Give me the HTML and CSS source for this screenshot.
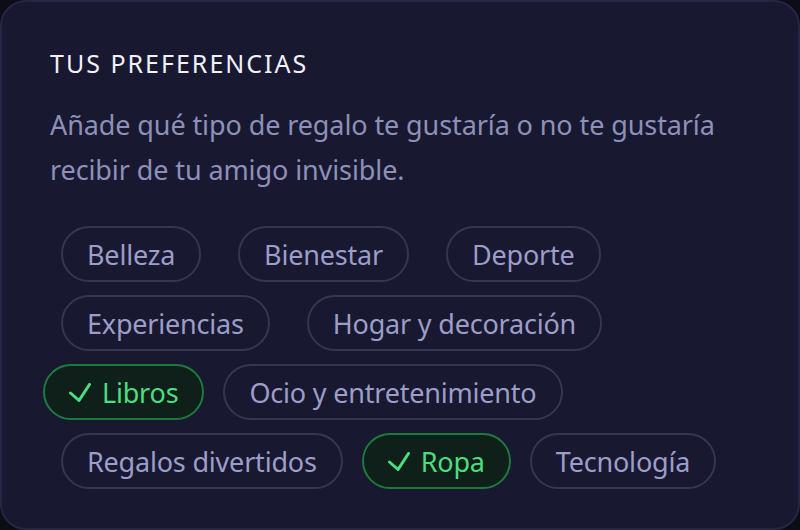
FILE: index.html
```html
<!DOCTYPE html>
<html lang="es">
<head>
  <meta charset="UTF-8">
  <meta name="viewport" content="width=device-width, initial-scale=1.0">
  <title>Tus preferencias</title>
  <link rel="stylesheet" href="styles.css">
</head>
<body>
  <div class="card">
    <h2 class="card-title">TUS PREFERENCIAS</h2>
    <p class="card-text">Añade qué tipo de regalo te gustaría o no te gustaría recibir de tu amigo invisible.</p>
    <div class="chips">
      <button class="chip">Belleza</button>
      <button class="chip">Bienestar</button>
      <button class="chip">Deporte</button>
      <button class="chip">Experiencias</button>
      <button class="chip">Hogar y decoración</button>
      <button class="chip selected">
        <svg class="check" viewBox="0 0 22 19"><polyline points="1.5,10 10,17.5 20.5,1.5"/></svg>Libros
      </button>
      <button class="chip">Ocio y entretenimiento</button>
      <button class="chip">Regalos divertidos</button>
      <button class="chip selected">
        <svg class="check" viewBox="0 0 22 19"><polyline points="1.5,10 10,17.5 20.5,1.5"/></svg>Ropa
      </button>
      <button class="chip">Tecnología</button>
    </div>
  </div>
</body>
</html>
```
FILE: styles.css
```css
body {
  margin: 0;
  background: #0d0d18;
  font-family: "Noto Sans", "Open Sans", sans-serif;
}
.card {
  box-sizing: border-box;
  width: 800px;
  height: 530px;
  padding: 44px 48px 0 48px;
  background: #181830;
  border: 2px solid #262642;
  border-radius: 26px;
}
.card-title {
  margin: 0;
  font-size: 25px;
  line-height: 35px;
  font-weight: 400;
  letter-spacing: 2px;
  color: #f1f1f7;
}
.card-text {
  margin: 21px 0 0 0;
  font-size: 27px;
  line-height: 45px;
  letter-spacing: -0.1px;
  color: #8d90b8;
}
.chips {
  display: flex;
  flex-wrap: wrap;
  column-gap: 1px;
  row-gap: 13px;
  margin: 34px -7px 0 -7px;
}
.chip {
  display: flex;
  align-items: center;
  gap: 11px;
  box-sizing: border-box;
  height: 56px;
  margin: 0 18px;
  padding: 0 24px;
  font-family: inherit;
  font-size: 27px;
  letter-spacing: -0.2px;
  color: #9c9ec9;
  background: transparent;
  border: 2px solid #363652;
  border-radius: 28px;
}
.chip.selected {
  margin: 0;
  color: #4ade80;
  background: #0f1f19;
  border-color: #1d7a3d;
}
.check {
  width: 22px;
  height: 19px;
  fill: none;
  stroke: #4ade80;
  stroke-width: 3;
  stroke-linecap: round;
  stroke-linejoin: round;
}
```
